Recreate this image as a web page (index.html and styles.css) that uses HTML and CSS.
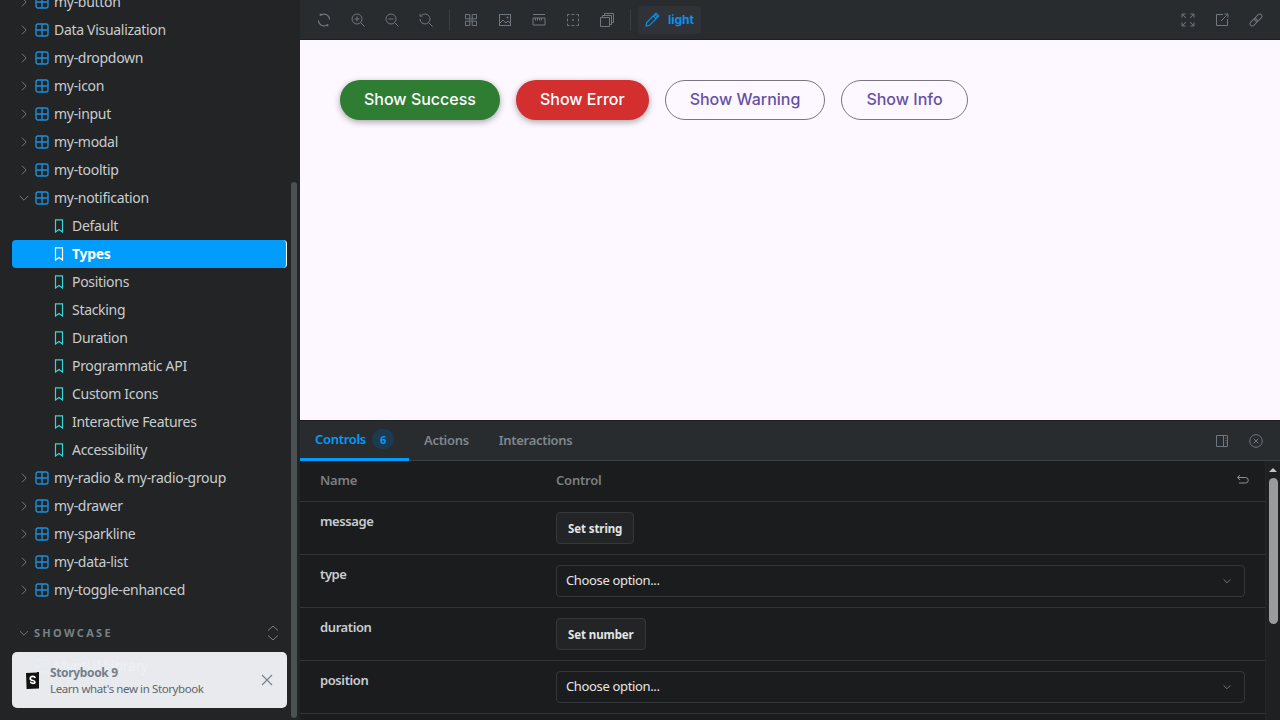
FILE: index.html
```html
<!DOCTYPE html>
<html lang="en">
<head>
    <meta charset="UTF-8">
    <title>my-notification - Types</title>
    <link rel="stylesheet" href="styles.css">
</head>
<body>
    <svg width="0" height="0" class="defs">
        <symbol id="comp" viewBox="0 0 14 14"><rect x="1" y="1" width="12" height="12" rx="2" fill="none" stroke="currentColor" stroke-width="1.4"/><path d="M7 1v12M1 7h12" stroke="currentColor" stroke-width="1.4"/></symbol>
        <symbol id="story" viewBox="0 0 14 14"><path d="M3.5 .8h7v12.2L7 10.4 3.5 13z" fill="none" stroke="currentColor" stroke-width="1.2"/></symbol>
        <symbol id="right" viewBox="0 0 10 10"><path d="M3 .8 7.200 5 3 9.200" fill="none" stroke="currentColor" stroke-width="1"/></symbol>
        <symbol id="down" viewBox="0 0 10 10"><path d="M.8 3 5 7.200 9.200 3" fill="none" stroke="currentColor" stroke-width="1"/></symbol>
    </svg>

    <aside class="sidebar">
        <ul class="tree">
            <li class="row"><svg class="arrow"><use href="#right"/></svg><svg class="comp"><use href="#comp"/></svg>my-button</li>
            <li class="row"><svg class="arrow"><use href="#right"/></svg><svg class="comp"><use href="#comp"/></svg>Data Visualization</li>
            <li class="row"><svg class="arrow"><use href="#right"/></svg><svg class="comp"><use href="#comp"/></svg>my-dropdown</li>
            <li class="row"><svg class="arrow"><use href="#right"/></svg><svg class="comp"><use href="#comp"/></svg>my-icon</li>
            <li class="row"><svg class="arrow"><use href="#right"/></svg><svg class="comp"><use href="#comp"/></svg>my-input</li>
            <li class="row"><svg class="arrow"><use href="#right"/></svg><svg class="comp"><use href="#comp"/></svg>my-modal</li>
            <li class="row"><svg class="arrow"><use href="#right"/></svg><svg class="comp"><use href="#comp"/></svg>my-tooltip</li>
            <li class="row"><svg class="arrow"><use href="#down"/></svg><svg class="comp"><use href="#comp"/></svg>my-notification</li>
            <li class="row child"><svg class="story"><use href="#story"/></svg>Default</li>
            <li class="row child current"><svg class="story"><use href="#story"/></svg>Types</li>
            <li class="row child"><svg class="story"><use href="#story"/></svg>Positions</li>
            <li class="row child"><svg class="story"><use href="#story"/></svg>Stacking</li>
            <li class="row child"><svg class="story"><use href="#story"/></svg>Duration</li>
            <li class="row child"><svg class="story"><use href="#story"/></svg>Programmatic API</li>
            <li class="row child"><svg class="story"><use href="#story"/></svg>Custom Icons</li>
            <li class="row child"><svg class="story"><use href="#story"/></svg>Interactive Features</li>
            <li class="row child"><svg class="story"><use href="#story"/></svg>Accessibility</li>
            <li class="row"><svg class="arrow"><use href="#right"/></svg><svg class="comp"><use href="#comp"/></svg>my-radio &amp; my-radio-group</li>
            <li class="row"><svg class="arrow"><use href="#right"/></svg><svg class="comp"><use href="#comp"/></svg>my-drawer</li>
            <li class="row"><svg class="arrow"><use href="#right"/></svg><svg class="comp"><use href="#comp"/></svg>my-sparkline</li>
            <li class="row"><svg class="arrow"><use href="#right"/></svg><svg class="comp"><use href="#comp"/></svg>my-data-list</li>
            <li class="row"><svg class="arrow"><use href="#right"/></svg><svg class="comp"><use href="#comp"/></svg>my-toggle-enhanced</li>
        </ul>
        <div class="section">
            <svg class="arrow"><use href="#down"/></svg>
            <span class="section-name">SHOWCASE</span>
            <svg class="expand" viewBox="0 0 14 18"><path d="M2 6.500 7 2l5 4.500M2 11.500 7 16l5-4.500" fill="none" stroke="currentColor"/></svg>
        </div>
        <div class="row faded"><svg class="arrow"><use href="#right"/></svg><svg class="comp"><use href="#comp"/></svg>MyntUI Library</div>

        <div class="sb-thumb"></div>

        <div class="whatsnew">
            <svg class="sb-logo" viewBox="0 0 13 17"><path d="M0 1.100 11 .4 11.400 0l1.600.1v16.300L.6 16.900z" fill="#111"/><path d="M9.200 6C8.900 4.900 8 4.400 6.700 4.400 5.300 4.400 4.200 5.100 4.200 6.400c0 2.700 4.700 1.500 4.700 3.500 0 .9-.8 1.400-2 1.400-1.300 0-2.200-.6-2.500-1.700" fill="none" stroke="#fff" stroke-width="1.700"/></svg>
            <div class="whatsnew-text">
                <div class="whatsnew-title">Storybook 9</div>
                <div>Learn what's new in Storybook</div>
            </div>
            <svg class="whatsnew-close" viewBox="0 0 12 12"><path d="M1 1l10 10M11 1 1 11" stroke="currentColor" stroke-width="1.100"/></svg>
        </div>
    </aside>

    <main class="main">
        <div class="toolbar">
            <svg class="tool" viewBox="0 0 14 14"><path d="M4 2.100A5.600 5.600 0 0 1 12.600 6.500M10 11.900A5.600 5.600 0 0 1 1.400 7.500" fill="none" stroke="currentColor" stroke-width="1.200"/><path d="M2.600 .8h2v2h-2zM9.400 11.200h2v2h-2z" fill="currentColor"/></svg>
            <svg class="tool" viewBox="0 0 14 14"><circle cx="6" cy="6" r="5" fill="none" stroke="currentColor"/><path d="M9.700 9.700 13.500 13.500M3.500 6h5M6 3.500v5" fill="none" stroke="currentColor"/></svg>
            <svg class="tool" viewBox="0 0 14 14"><circle cx="6" cy="6" r="5" fill="none" stroke="currentColor"/><path d="M9.700 9.700 13.500 13.500M3.500 6h5" fill="none" stroke="currentColor"/></svg>
            <svg class="tool" viewBox="0 0 14 14"><path d="M2.400 2.500A5 5 0 1 1 1 6M9.700 9.700 13.500 13.500" fill="none" stroke="currentColor"/><path d="M1 .8v2.400h2.400" fill="none" stroke="currentColor"/></svg>
            <span class="sep"></span>
            <svg class="tool" viewBox="0 0 14 14"><path d="M1.500 1.500h4.300v4.300H1.500zM8.200 1.500h4.300v4.300H8.200zM1.500 8.200h4.300v4.300H1.500zM8.200 8.200h4.300v4.300H8.200z" fill="none" stroke="currentColor"/><rect x="5" y="5" width="4" height="4" fill="currentColor" opacity=".5"/></svg>
            <svg class="tool" viewBox="0 0 14 14"><rect x="1.500" y="1.500" width="11" height="11" fill="none" stroke="currentColor"/><path d="M1.500 10.500 5 7l3 3 2-2 2.500 2.500" fill="none" stroke="currentColor"/><circle cx="9.500" cy="4.500" r="1" fill="currentColor"/></svg>
            <svg class="tool" viewBox="0 0 14 14"><path d="M1 1.500h12M1 5h12v7H1zM3.500 5v2.500M5.500 5v2.500M7.500 5v2.500M9.500 5v2.500" fill="none" stroke="currentColor"/></svg>
            <svg class="tool" viewBox="0 0 14 14"><path d="M1.500 3.500v-2h2M5.500 1.500h3M10.500 1.500h2v2M12.500 5.500v3M12.500 10.500v2h-2M8.500 12.500h-3M3.500 12.500h-2v-2M1.500 8.500v-3" fill="none" stroke="currentColor"/><circle cx="7" cy="7" r=".9" fill="currentColor"/></svg>
            <svg class="tool" viewBox="0 0 14 14"><path d="M.5 4.500h9v9h-9zM2.500 4.500v-2h9v9h-2M4.500 2.500v-2h9v9h-2" fill="none" stroke="currentColor"/></svg>
            <span class="sep"></span>
            <span class="theme">
                <svg class="theme-icon" viewBox="0 0 15 15"><path d="M1 14l.7-3.500L9.800 2.400l2.800 2.800-8.100 8.100zM8.300 4l2.800 2.800M11 1.200l2.800 2.800-1.200 1.200-2.800-2.800z" fill="none" stroke="currentColor" stroke-width="1.200"/></svg>
                light
            </span>
            <span class="spacer"></span>
            <svg class="tool" viewBox="0 0 14 14"><path d="M1 1l4 4M13 1 9 5M1 13l4-4M13 13 9 9M1 4.500V1h3.500M9.500 1H13v3.500M1 9.500V13h3.500M9.500 13H13V9.500" fill="none" stroke="currentColor"/></svg>
            <svg class="tool" viewBox="0 0 14 14"><path d="M8 1.500H1.500v11h11V6M6 8l7-7M9.500 1H13v3.500" fill="none" stroke="currentColor"/></svg>
            <svg class="tool" viewBox="0 0 14 14"><g transform="rotate(-45 7 7)" fill="none" stroke="currentColor"><rect x="-.5" y="4.800" width="8.500" height="4.400" rx="2.200"/><rect x="6" y="4.800" width="8.500" height="4.400" rx="2.200"/></g></svg>
        </div>

        <div class="canvas">
            <button class="demo success">Show Success</button>
            <button class="demo error">Show Error</button>
            <button class="demo outline">Show Warning</button>
            <button class="demo outline">Show Info</button>
        </div>

        <section class="panel">
            <div class="tabs">
                <span class="tab tab-selected">Controls <span class="count">6</span></span>
                <span class="tab">Actions</span>
                <span class="tab">Interactions</span>
                <span class="spacer"></span>
                <svg class="tool" viewBox="0 0 14 14"><path d="M1.500 1.500h11v11h-11zM8.500 1.500v11M10.500 4h1M10.500 6.500h1M10.500 9h1" fill="none" stroke="currentColor"/></svg>
                <svg class="tool" viewBox="0 0 14 14"><circle cx="7" cy="7" r="6.300" fill="none" stroke="currentColor"/><path d="M4.700 4.700l4.600 4.600M9.300 4.700 4.700 9.300" stroke="currentColor"/></svg>
            </div>
            <div class="controls">
                <div class="table">
                    <div class="table-row head">
                        <div class="col-name">Name</div>
                        <div class="col-control">Control</div>
                        <svg class="reset" viewBox="0 0 14 14"><path d="M4 2 1.500 4.500 4 7M1.500 4.500H9.500a2.700 2.700 0 0 1 0 5.500H3" fill="none" stroke="currentColor"/></svg>
                    </div>
                    <div class="table-row">
                        <div class="col-name arg">message</div>
                        <div class="col-control"><button class="set">Set string</button></div>
                    </div>
                    <div class="table-row">
                        <div class="col-name arg">type</div>
                        <div class="col-control"><div class="select">Choose option...<svg class="select-arrow"><use href="#down"/></svg></div></div>
                    </div>
                    <div class="table-row">
                        <div class="col-name arg">duration</div>
                        <div class="col-control"><button class="set">Set number</button></div>
                    </div>
                    <div class="table-row">
                        <div class="col-name arg">position</div>
                        <div class="col-control"><div class="select">Choose option...<svg class="select-arrow"><use href="#down"/></svg></div></div>
                    </div>
                </div>
                <div class="scrollbar">
                    <span class="scroll-up"></span>
                    <span class="scroll-thumb"></span>
                </div>
            </div>
        </section>
    </main>
</body>
</html>
```

FILE: styles.css
```css
* {
    box-sizing: border-box;
}
html, body {
    height: 100%;
}
body {
    margin: 0;
    display: flex;
    overflow: hidden;
    background: #222425;
    font-family: "Noto Sans", "Open Sans", sans-serif;
    font-size: 14px;
    color: #c9cdcf;
}
.defs {
    position: absolute;
}
.spacer {
    flex: 1;
}

/* sidebar */
.sidebar {
    position: relative;
    width: 300px;
    height: 720px;
    flex-shrink: 0;
    overflow: hidden;
    background: #222425;
}
.tree {
    list-style: none;
    margin: -12px 0 0;
    padding: 0 13px 0 12px;
}
.row {
    display: flex;
    align-items: center;
    height: 28px;
    padding-left: 7px;
    padding-bottom: 2px;
    font-size: 14px;
    letter-spacing: -0.3px;
    white-space: nowrap;
    border-radius: 4px;
}
.arrow {
    width: 10px;
    height: 10px;
    margin-right: 6px;
    margin-top: 2px;
    flex-shrink: 0;
    color: #72787c;
}
.comp {
    width: 14px;
    height: 14px;
    margin-right: 5px;
    margin-top: 2px;
    color: #1a8fdc;
    flex-shrink: 0;
}
.child {
    padding-left: 40px;
}
.story {
    width: 14px;
    height: 14px;
    margin-right: 6px;
    margin-top: 2px;
    color: #37d5d3;
    flex-shrink: 0;
}
.current {
    background: #029cfd;
    color: #fff;
    font-weight: 700;
    border-right: 1px solid #fff;
}
.current .story {
    color: #fff;
}
.section {
    display: flex;
    align-items: center;
    height: 20px;
    margin-top: 19px;
    padding: 0 20px 0 19px;
}
.section .arrow {
    margin-right: 5px;
    margin-top: 0;
}
.section-name {
    flex: 1;
    padding-bottom: 2px;
    font-size: 11px;
    font-weight: 700;
    letter-spacing: 2.3px;
    color: #798186;
}
.expand {
    width: 14px;
    height: 18px;
    color: #798186;
}
.faded {
    margin: 9px 13px 0 12px;
}
.sb-thumb {
    position: absolute;
    top: 182px;
    right: 3px;
    width: 6px;
    height: 536px;
    border-radius: 3px;
    background: #4b5052;
}
.whatsnew {
    position: absolute;
    left: 12px;
    top: 652px;
    width: 275px;
    height: 56px;
    display: flex;
    align-items: center;
    padding: 0 14px;
    border-radius: 5px;
    background: rgba(238, 241, 244, 0.97);
    color: #5c6870;
    font-size: 11.500px;
    line-height: 16px;
    letter-spacing: -0.4px;
}
.sb-logo {
    width: 13px;
    height: 17px;
    margin-right: 11px;
}
.whatsnew-text {
    flex: 1;
}
.whatsnew-title {
    padding-top: 1px;
    font-size: 12px;
    font-weight: 700;
    color: #73808a;
    letter-spacing: -0.35px;
}
.whatsnew-close {
    width: 12px;
    height: 12px;
    color: #76808a;
}

/* main */
.main {
    flex: 1;
    min-width: 0;
    display: flex;
    flex-direction: column;
    height: 720px;
}
.toolbar {
    display: flex;
    align-items: center;
    height: 40px;
    padding: 0 17px;
    gap: 20px;
    background: #292c2f;
    border-bottom: 1px solid #1d1f20;
    flex-shrink: 0;
}
.tool {
    width: 14px;
    height: 14px;
    color: #6f787f;
    flex-shrink: 0;
}
.sep {
    width: 1px;
    height: 20px;
    margin: 0 -6px 0 -4px;
    background: #3b3f42;
}
.theme {
    display: flex;
    align-items: center;
    height: 28px;
    margin-left: -7px;
    padding: 0 7px;
    gap: 8px;
    border-radius: 4px;
    background: #2f3337;
    color: #0b90ea;
    font-family: Inter, sans-serif;
    font-size: 12px;
    font-weight: 700;
}
.theme-icon {
    width: 15px;
    height: 15px;
}
.canvas {
    flex: 1;
    display: flex;
    align-items: flex-start;
    gap: 16px;
    padding: 40px;
    background: #fdf8ff;
}
.demo {
    height: 40px;
    padding: 0 24px 2px;
    border-radius: 20px;
    border: none;
    font-family: Inter, sans-serif;
    font-size: 16px;
    font-weight: 500;
}
.success {
    background: #2e7d32;
    color: #fff;
    box-shadow: 0 2px 6px rgba(0, 0, 0, 0.35);
}
.error {
    background: #d32f2f;
    color: #fff;
    box-shadow: 0 2px 6px rgba(0, 0, 0, 0.35);
}
.outline {
    background: transparent;
    border: 1px solid #79747e;
    color: #6750a4;
}

/* addon panel */
.panel {
    height: 300px;
    flex-shrink: 0;
    display: flex;
    flex-direction: column;
    background: #1b1c1d;
}
.tabs {
    display: flex;
    align-items: center;
    height: 41px;
    padding-right: 17px;
    gap: 20px;
    background: #292c2f;
    border-top: 1px solid #1d1f20;
    border-bottom: 1px solid #3c4043;
    flex-shrink: 0;
}
.tab {
    display: flex;
    align-items: center;
    height: 40px;
    padding: 0 15px 2px;
    margin-right: -20px;
    font-size: 13px;
    font-weight: 600;
    letter-spacing: -0.3px;
    color: #7f878c;
}
.tab-selected {
    color: #029cfd;
    border-bottom: 3px solid #029cfd;
    padding-top: 1px;
    padding-bottom: 1px;
}
.count {
    display: flex;
    align-items: center;
    justify-content: center;
    width: 22px;
    height: 20px;
    margin-left: 6px;
    border-radius: 10px;
    background: #1d3a50;
    font-size: 11px;
    font-weight: 700;
}
.tabs .spacer {
    margin-right: 0;
}
.controls {
    flex: 1;
    display: flex;
    min-height: 0;
}
.table {
    flex: 1;
    min-width: 0;
    overflow: hidden;
}
.table-row {
    display: flex;
    height: 53px;
    padding: 10px 20px;
    border-bottom: 1px solid #323437;
}
.head {
    height: 41px;
    align-items: center;
    padding: 0 20px 2px;
    font-size: 13px;
    font-weight: 600;
    letter-spacing: -0.2px;
    color: #7a7f83;
}
.col-name {
    width: 236px;
    flex-shrink: 0;
}
.arg {
    font-size: 13px;
    font-weight: 600;
    letter-spacing: -0.4px;
    color: #c9cdcf;
    padding-top: 0;
}
.col-control {
    flex: 1;
}
.reset {
    width: 14px;
    height: 14px;
    margin-right: -5px;
    color: #8a9196;
}
.set {
    height: 32px;
    padding: 0 11px;
    border: 1px solid #35383b;
    border-radius: 4px;
    background: #222426;
    color: #e3e5e6;
    font-family: "Noto Sans", sans-serif;
    font-size: 11.500px;
    font-weight: 700;
    letter-spacing: -0.1px;
}
.select {
    display: flex;
    align-items: center;
    justify-content: space-between;
    height: 32px;
    padding: 0 13px 3px 9px;
    border: 1px solid #35383b;
    border-radius: 4px;
    color: #e3e5e6;
    font-size: 13px;
    letter-spacing: -0.35px;
}
.select-arrow {
    width: 8px;
    height: 8px;
    margin-top: 3px;
    color: #8a9196;
}
.scrollbar {
    width: 15px;
    flex-shrink: 0;
    display: flex;
    flex-direction: column;
    align-items: center;
    background: #1f2021;
    border-left: 1px solid #232527;
}
.scroll-up {
    width: 0;
    height: 0;
    margin-top: 7px;
    border-left: 4px solid transparent;
    border-right: 4px solid transparent;
    border-bottom: 4px solid #c4c4c4;
}
.scroll-thumb {
    width: 9px;
    height: 146px;
    margin-top: 6px;
    border-radius: 5px;
    background: #9b9b9b;
}
```
